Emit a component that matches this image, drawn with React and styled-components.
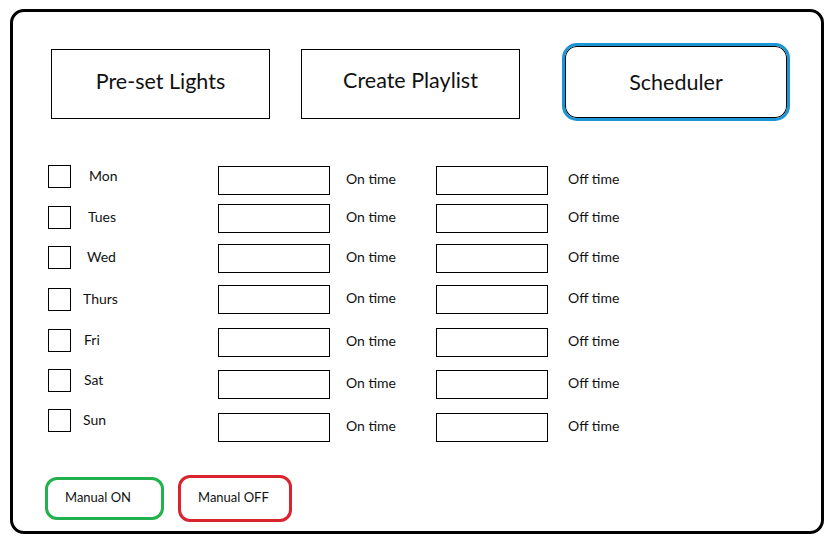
import React from 'react';
import styled, { createGlobalStyle } from 'styled-components';

const GlobalStyle = createGlobalStyle`
  body {
    margin: 0;
    background: #fff;
    font-family: Lato, "Open Sans", sans-serif;
    color: #111;
  }
`

const Frame = styled.div`
  box-sizing: border-box;
  width: 814px;
  height: 525px;
  margin: 9px 0 0 10px;
  border: 3px solid #000;
  border-radius: 14px;
  display: flex;
  flex-direction: column;
`

const Nav = styled.div`
  display: flex;
  align-items: flex-start;
  gap: 31px;
  height: 78px;
  margin-top: 31px;
  padding-left: 38px;
`

const Tab = styled.div`
  box-sizing: border-box;
  width: ${p => p.$active ? '228px' : '219px'};
  height: ${p => p.$active ? '78px' : '70px'};
  margin-left: ${p => p.$active ? '11px' : '0'};
  margin-top: ${p => p.$active ? '0' : '6px'};
  border: ${p => p.$active ? '3px solid #1b95d3' : '1px solid #000'};
  border-radius: ${p => p.$active ? '15px' : '0'};
  box-shadow: ${p => p.$active ? 'inset 0 0 0 1px #000' : 'none'};
  display: flex;
  align-items: center;
  justify-content: center;
  font-size: 21.5px;
  padding-bottom: ${p => p.$pad}px;
`

const Schedule = styled.div`
  display: flex;
  flex-direction: column;
  margin-top: 45px;
  padding-left: 35px;
`

const Row = styled.div`
  display: grid;
  grid-template-columns: 23px 147px 112px 106px 112px auto;
  align-items: center;
  height: 28px;
  margin-top: ${p => p.$gap}px;
  font-size: 14px;
`

const Check = styled.div`
  box-sizing: border-box;
  width: 23px;
  height: 23px;
  border: 1px solid #000;
  transform: translateY(${p => p.$lift}px);
`

const Day = styled.span`
  padding-left: ${p => p.$indent}px;
  transform: translateY(${p => p.$lift - 1}px);
`

const TimeBox = styled.div`
  box-sizing: border-box;
  height: 29px;
  border: 1px solid #000;
`

const TimeLabel = styled.span`
  padding-left: ${p => p.$indent}px;
  transform: translateY(-2px);
`

const Footer = styled.div`
  display: flex;
  align-items: center;
  gap: 14px;
  margin-top: 34px;
  padding-left: 32px;
  height: 47px;
`

const Manual = styled.div`
  box-sizing: border-box;
  width: ${p => p.$w}px;
  height: ${p => p.$h}px;
  border: 3px solid ${p => p.$color};
  border-radius: 12px;
  display: flex;
  align-items: center;
  padding-left: 17px;
  padding-bottom: 3px;
  font-size: 13px;
`

const days = [
  { name: 'Mon', gap: 0, lift: -4, indent: 18 },
  { name: 'Tues', gap: 10, lift: -1, indent: 17 },
  { name: 'Wed', gap: 12, lift: -1, indent: 16 },
  { name: 'Thurs', gap: 13, lift: 0, indent: 12 },
  { name: 'Fri', gap: 15, lift: -2, indent: 13 },
  { name: 'Sat', gap: 14, lift: -4, indent: 13 },
  { name: 'Sun', gap: 15, lift: -7, indent: 12 },
]

const App = () => (
  <>
    <GlobalStyle />
    <Frame>
      <Nav>
        <Tab $pad={7}>Pre-set Lights</Tab>
        <Tab $pad={9}>Create Playlist</Tab>
        <Tab $active $pad={1}>Scheduler</Tab>
      </Nav>

      <Schedule>
        {days.map(d => (
          <Row key={d.name} $gap={d.gap}>
            <Check $lift={d.lift} />
            <Day $lift={d.lift} $indent={d.indent}>{d.name}</Day>
            <TimeBox />
            <TimeLabel $indent={16}>On time</TimeLabel>
            <TimeBox />
            <TimeLabel $indent={20}>Off time</TimeLabel>
          </Row>
        ))}
      </Schedule>

      <Footer>
        <Manual $color="#22b14c" $w={119} $h={43}>Manual ON</Manual>
        <Manual $color="#d9232d" $w={114} $h={47}>Manual OFF</Manual>
      </Footer>
    </Frame>
  </>
)

export default App;
